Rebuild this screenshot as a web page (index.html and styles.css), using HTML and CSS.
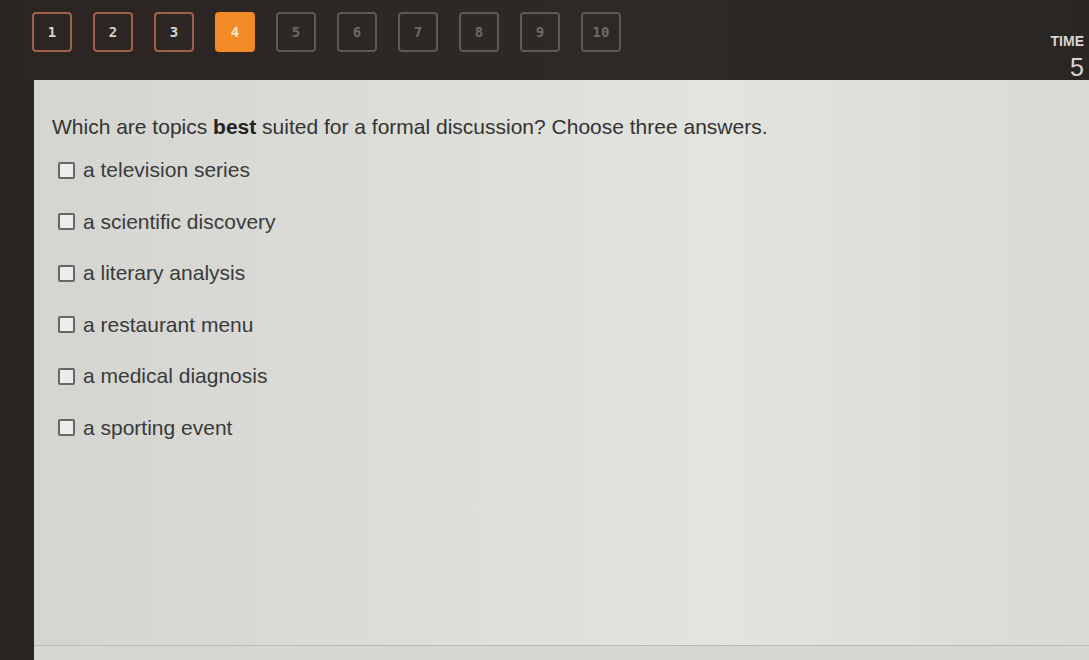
FILE: index.html
```html
<!DOCTYPE html>
<html lang="en">
<head>
    <meta charset="UTF-8">
    <meta name="viewport" content="width=device-width, initial-scale=1.0">
    <title>Quiz</title>
    <link rel="stylesheet" href="styles.css">
</head>
<body>

    <header class="quiz-header">
        <nav class="question-nav">
            <span class="q-btn done">1</span>
            <span class="q-btn done">2</span>
            <span class="q-btn done">3</span>
            <span class="q-btn current">4</span>
            <span class="q-btn">5</span>
            <span class="q-btn">6</span>
            <span class="q-btn">7</span>
            <span class="q-btn">8</span>
            <span class="q-btn">9</span>
            <span class="q-btn">10</span>
        </nav>
        <div class="timer">
            <span class="timer-label">TIME</span>
            <span class="timer-value">5</span>
        </div>
    </header>

    <main class="question-panel">
        <p class="question-text">
            Which are topics <b>best</b> suited for a formal discussion? Choose three answers.
        </p>

        <ul class="answer-list">
            <li><label><input type="checkbox"><span class="box"></span>a television series</label></li>
            <li><label><input type="checkbox"><span class="box"></span>a scientific discovery</label></li>
            <li><label><input type="checkbox"><span class="box"></span>a literary analysis</label></li>
            <li><label><input type="checkbox"><span class="box"></span>a restaurant menu</label></li>
            <li><label><input type="checkbox"><span class="box"></span>a medical diagnosis</label></li>
            <li><label><input type="checkbox"><span class="box"></span>a sporting event</label></li>
        </ul>

        <div class="panel-footer"></div>
    </main>

</body>
</html>
```

FILE: styles.css
```css
/* --- Quiz screen --- */
:root {
    --frame-color: #2a2523;
    --done-border: #a2604c;
    --todo-border: #5f5955;
    --accent: #f28a25;
    --panel-color: #dcdcd8;
    --text-color: #333;
}

body {
    margin: 0;
    height: 660px;
    overflow: hidden;
    background-color: var(--frame-color);
    font-family: "Liberation Sans", Arial, sans-serif;
    display: flex;
    flex-direction: column;
}

/* --- Question navigation --- */
.quiz-header {
    display: flex;
    justify-content: space-between;
    height: 80px;
    padding: 12px 5px 0 32px;
    box-sizing: border-box;
    background: linear-gradient(90deg, #2b2624 0%, #2e2927 60%, #2a2624 100%);
}

.question-nav {
    display: flex;
    gap: 21px;
}

.q-btn {
    width: 40px;
    height: 40px;
    box-sizing: border-box;
    display: flex;
    justify-content: center;
    align-items: center;
    border: 2px solid var(--todo-border);
    border-radius: 4px;
    color: #6f6964;
    font-family: "DejaVu Sans Mono", monospace;
    font-size: 14px;
    font-weight: bold;
}

.q-btn.done {
    border-color: var(--done-border);
    color: #d8d4cf;
}

.q-btn.current {
    background-color: var(--accent);
    border-color: var(--accent);
    color: #fbe7cf;
}

/* --- Timer --- */
.timer {
    display: flex;
    flex-direction: column;
    align-items: flex-end;
    padding-top: 21px;
    color: #d9d6d2;
}

.timer-label {
    font-size: 14px;
    line-height: 16px;
    font-weight: bold;
}

.timer-value {
    font-size: 25px;
    line-height: 26px;
    margin-top: 5px;
}

/* --- Question panel --- */
.question-panel {
    flex: 1;
    margin-left: 34px;
    display: flex;
    flex-direction: column;
    background: linear-gradient(90deg, #d4d5d1 0%, #dcddd8 35%, #e3e3df 65%, #d9d9d6 100%);
    color: var(--text-color);
}

.question-text {
    margin: 35px 0 0 18px;
    font-size: 21px;
    line-height: 24px;
}

.question-text b {
    color: #222;
}

.answer-list {
    list-style: none;
    margin: 19px 0 0 24px;
    padding: 0;
    display: flex;
    flex-direction: column;
    gap: 27.5px;
}

.answer-list label {
    display: flex;
    align-items: center;
    gap: 8px;
    font-size: 21px;
    line-height: 24px;
    color: #3a3a3a;
}

.answer-list input {
    display: none;
}

.box {
    width: 13px;
    height: 13px;
    border: 2px solid #666;
    border-radius: 2px;
    background-color: #ececea;
}

.panel-footer {
    margin-top: auto;
    height: 14px;
    border-top: 1px solid #b9bab6;
    background-color: #d6d7d3;
}
```
